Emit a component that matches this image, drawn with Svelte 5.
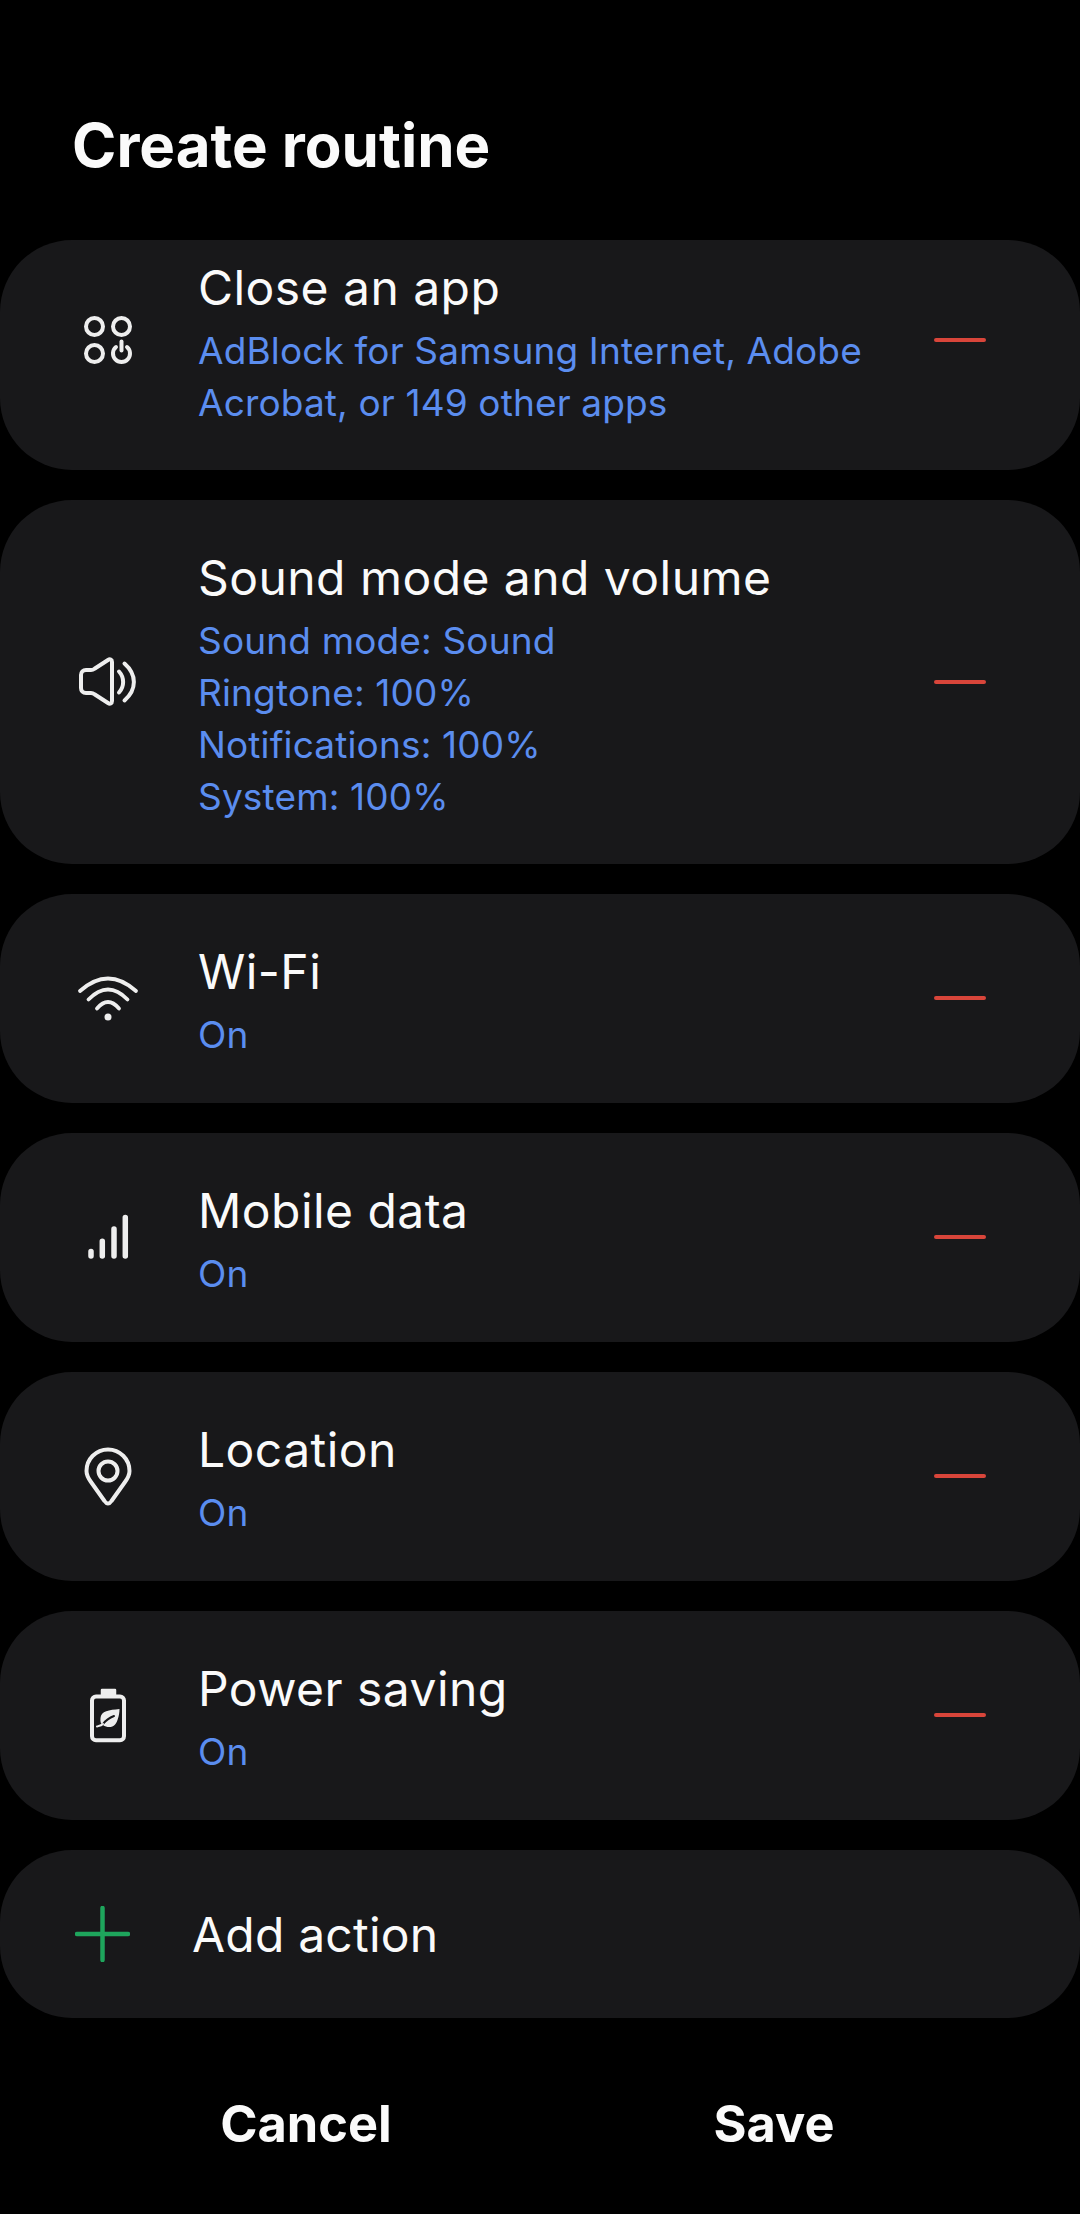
<script>
  const rows = [
    { id: 'app', title: 'Close an app', subs: ['AdBlock for Samsung Internet, Adobe', 'Acrobat, or 149 other apps'], first: true },
    { id: 'sound', title: 'Sound mode and volume', subs: ['Sound mode: Sound', 'Ringtone: 100%', 'Notifications: 100%', 'System: 100%'] },
    { id: 'wifi', title: 'Wi-Fi', subs: ['On'] },
    { id: 'data', title: 'Mobile data', subs: ['On'] },
    { id: 'loc', title: 'Location', subs: ['On'] },
    { id: 'power', title: 'Power saving', subs: ['On'] }
  ];
</script>

<main class="page">
  <h1>Create routine</h1>
  <section class="list">
    {#each rows as r}
      <div class="card">
        <div class="row" class:first={r.first} class:multi={r.subs.length > 1}>
          <div class="icon">
            <svg width="72" height="72" viewBox="0 0 72 72" fill="none" stroke="#eeeeee" stroke-width="4" stroke-linecap="round" stroke-linejoin="round">
              {#if r.id === 'app'}
                <circle cx="22.5" cy="22.5" r="8.5" />
                <circle cx="49.500" cy="22.5" r="8.5" />
                <circle cx="22.5" cy="49.500" r="8.5" />
                <path d="M44 43a8.500 8.500 0 1 0 11 0" />
                <path d="M49.500 37.500v9" />
              {:else if r.id === 'sound'}
                <path d="M9 29c0-3 2-5 5-5h5c1.500 0 2.500-.5 3.500-1.300L36 14c2-1.300 4-.5 4 2v39c0 2.500-2 3.300-4 2L22.500 48.300c-1-.8-2-1.300-3.500-1.300h-5c-3 0-5-2-5-5z" />
                <path d="M47 25.500c5.500 6 5.500 15 0 21" />
                <path d="M52.500 17.500c12.500 11 12.500 26 0 37" />
              {:else if r.id === 'wifi'}
                <path d="M8 29Q36 4 64 29" stroke-width="3.800" />
                <path d="M16.500 37.500Q36 17.500 55.500 37.500" stroke-width="3.800" />
                <path d="M25 46.500Q36 33.500 47 46.500" stroke-width="3.800" />
                <circle cx="36" cy="55" r="3.500" fill="#eeeeee" stroke="none" />
              {:else if r.id === 'data'}
                <path d="M19 50.500V55M30.300 40.300V55M42 28V55M53.300 16.500V55" stroke-width="5.500" />
              {:else if r.id === 'loc'}
                <path d="M36 63.500c-1.500 0-2.500-1-3.500-2.500L19 42c-2.800-3.800-4.500-6.500-4.500-11 0-11.900 9.600-21.500 21.500-21.500S57.500 19.100 57.500 31c0 4.500-1.700 7.200-4.500 11L39.500 61c-1 1.500-2 2.500-3.500 2.500z" />
                <circle cx="36" cy="31" r="9.500" />
              {:else if r.id === 'power'}
                <rect x="20" y="17.500" width="32" height="43.700" rx="4" />
                <path d="M30 11h13v5H30z" fill="#eeeeee" stroke-width="2.500" />
                <path d="M47.500 30C37 31 29 32 28.500 39 28 43 29 45 31 46 36 49.500 43 49 45.500 41 47 37 47.500 33 47.500 30z" fill="#eeeeee" stroke="none" />
                <path d="M31 45C34 41 38 38.500 42 37" stroke="#18181a" stroke-width="2" />
                <path d="M25 47.500C27 47 29.500 46.500 31 45" stroke-width="2" />
              {/if}
            </svg>
          </div>
          <div class="text">
            <div class="title">{r.title}</div>
            {#each r.subs as s}
              <div class="sub">{s}</div>
            {/each}
          </div>
          <div class="minus"></div>
        </div>
      </div>
    {/each}
    <div class="card add">
      <svg class="plus" width="55" height="56" viewBox="0 0 55 56" fill="none" stroke="#1ea55c" stroke-width="4.500" stroke-linecap="round">
        <path d="M2 28h51M27.500 2v52" />
      </svg>
      <span>Add action</span>
    </div>
  </section>
  <footer>
    <div class="btn">Cancel</div>
    <div class="btn">Save</div>
  </footer>
</main>

<style>
  :global(body) {
    margin: 0;
    background: #000;
  }
  .page {
    width: 1080px;
    height: 2214px;
    overflow: hidden;
    background: #000;
    color: #fafafa;
    font-family: Inter, "Noto Sans", sans-serif;
  }
  h1 {
    margin: 0;
    padding: 106px 0 0 72px;
    height: 240px;
    box-sizing: border-box;
    font-size: 60px;
    line-height: 78px;
    font-weight: 700;
  }
  .list {
    display: flex;
    flex-direction: column;
    gap: 30px;
  }
  .card {
    background: #18181a;
    border-radius: 72px;
    overflow: hidden;
  }
  .row {
    display: flex;
    align-items: center;
    padding: 41px 0 42px 72px;
  }
  .row.multi {
    padding-bottom: 41px;
  }
  .row.first {
    margin-top: -30px;
  }
  .icon {
    width: 72px;
    height: 72px;
    margin-right: 54px;
    flex: none;
  }
  .icon svg {
    display: block;
  }
  .text {
    flex: 1;
  }
  .title {
    font-size: 48px;
    line-height: 74px;
    font-weight: 400;
    letter-spacing: 0.45px;
  }
  .sub {
    font-size: 37px;
    line-height: 52px;
    color: #5b8def;
    letter-spacing: 0.15px;
  }
  .minus {
    flex: none;
    width: 52px;
    height: 4px;
    border-radius: 2px;
    background: #d8453a;
    margin-right: 94px;
  }
  .add {
    height: 168px;
    display: flex;
    align-items: center;
    padding-left: 75px;
    font-size: 48px;
    letter-spacing: 0.2px;
  }
  .plus {
    margin-right: 62px;
  }
  footer {
    display: grid;
    grid-template-columns: 468px 468px;
    padding: 66px 72px 0;
  }
  .btn {
    text-align: center;
    font-size: 50.5px;
    line-height: 80px;
    font-weight: 700;
  }
</style>
